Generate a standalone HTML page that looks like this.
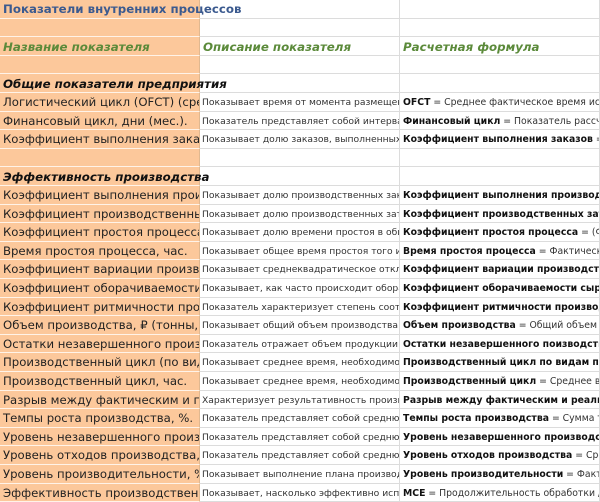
<!DOCTYPE html>
<html><head><meta charset="utf-8"><style>
*{margin:0;padding:0;box-sizing:border-box}
body{width:600px;height:502px;overflow:hidden;background:#fff;font-family:"DejaVu Sans","Liberation Sans",sans-serif;position:relative}
.r{position:absolute;left:0;width:600px;height:18.6px}
.c{position:absolute;top:0;height:18.6px;overflow:hidden;white-space:nowrap;border-bottom:1px solid #dcdcdc;border-right:1px solid #dcdcdc;line-height:18px}
.a{left:0;width:200px;background:#fcc89b;font-size:11.7px;color:#222;padding-left:3px;border-right:1px solid #e0b890;border-bottom-color:#fff3e8}
.b{left:200px;width:200px;font-size:9.2px;color:#333;padding-left:2px;line-height:20px}
.d{left:400px;width:200px;font-size:9.3px;color:#333;padding-left:3px;line-height:19px}
.d b{color:#111}
.o{position:absolute;top:0;left:3px;line-height:18px;white-space:nowrap;z-index:2}
</style></head><body>
<div id="g"></div>
<script>
var rows=[
['t','Показатели внутренних процессов'],
['e'],
['h'],
['e'],
['s','Общие показатели предприятия'],
['n','Логистический цикл (OFCT) (среднее','Показывает время от момента размещения','<b>OFCT</b> = Среднее фактическое время исполнения'],
['n','Финансовый цикл, дни (мес.).','Показатель представляет собой интервал','<b>Финансовый цикл</b> = Показатель рассчитывается'],
['n','Коэффициент выполнения заказов','Показывает долю заказов, выполненных','<b>Коэффициент выполнения заказов</b> = Т'],
['e'],
['s','Эффективность производства'],
['n','Коэффициент выполнения производств','Показывает долю производственных заказов','<b>Коэффициент выполнения производства</b>'],
['n','Коэффициент производственных затрат','Показывает долю производственных затрат','<b>Коэффициент производственных затрат</b>'],
['n','Коэффициент простоя процесса','Показывает долю времени простоя в общем','<b>Коэффициент простоя процесса</b> = (Фактическое'],
['n','Время простоя процесса, час.','Показывает общее время простоя того или','<b>Время простоя процесса</b> = Фактическое'],
['n','Коэффициент вариации производства','Показывает среднеквадратическое отклонение','<b>Коэффициент вариации производства</b>'],
['n','Коэффициент оборачиваемости сырья','Показывает, как часто происходит оборачиваемость','<b>Коэффициент оборачиваемости сырья</b>'],
['n','Коэффициент ритмичности производства','Показатель характеризует степень соответствия','<b>Коэффициент ритмичности производства</b>'],
['n','Объем производства, ₽ (тонны, шт.)','Показывает общий объем производства продукции','<b>Объем производства</b> = Общий объем производства'],
['n','Остатки незавершенного производства','Показатель отражает объем продукции (работ)','<b>Остатки незавершенного поизводства</b>'],
['n','Производственный цикл (по видам','Показывает среднее время, необходимое для','<b>Производственный цикл по видам продукции</b>'],
['n','Производственный цикл, час.','Показывает среднее время, необходимое для','<b>Производственный цикл</b> = Среднее время'],
['n','Разрыв между фактическим и плановым','Характеризует результативность производства','<b>Разрыв между фактическим и реальным</b>'],
['n','Темпы роста производства, %.','Показатель представляет собой среднюю','<b>Темпы роста производства</b> = Сумма темпов'],
['n','Уровень незавершенного производства','Показатель представляет собой среднюю','<b>Уровень незавершенного производства</b>'],
['n','Уровень отходов производства, %.','Показатель представляет собой среднюю','<b>Уровень отходов производства</b> = Средний'],
['n','Уровень производительности, %.','Показывает выполнение плана производства','<b>Уровень производительности</b> = Фактический'],
['n','Эффективность производственного','Показывает, насколько эффективно используется','<b>MCE</b> = Продолжительность обработки / Продолжительность']
];
var h='';
rows.forEach(function(r,i){
 var top=(i*18.6).toFixed(2);
 h+='<div class="r" style="top:'+top+'px">';
 if(r[0]=='n'){
  h+='<div class="c a">'+r[1]+'</div><div class="c b">'+r[2]+'</div><div class="c d">'+r[3]+'</div>';
 }else{
  h+='<div class="c a"></div><div class="c b"></div><div class="c d"></div>';
  if(r[0]=='t')h+='<div class="o" style="font-size:11.8px;font-weight:bold;color:#3b5a8f">'+r[1]+'</div>';
  if(r[0]=='s')h+='<div class="o" style="font-size:11.8px;font-weight:bold;font-style:italic;color:#111;top:1px">'+r[1]+'</div>';
  if(r[0]=='h')h+='<div class="o" style="font-size:11.8px;font-weight:bold;font-style:italic;color:#5b8a3a;top:1px">Название показателя</div><div class="o" style="left:203px;font-size:11.8px;font-weight:bold;font-style:italic;color:#5b8a3a;top:1px">Описание показателя</div><div class="o" style="left:403px;font-size:11.8px;font-weight:bold;font-style:italic;color:#5b8a3a;top:1px">Расчетная формула</div>';
 }
 h+='</div>';
});
document.getElementById('g').innerHTML=h;
</script>
</body></html>
